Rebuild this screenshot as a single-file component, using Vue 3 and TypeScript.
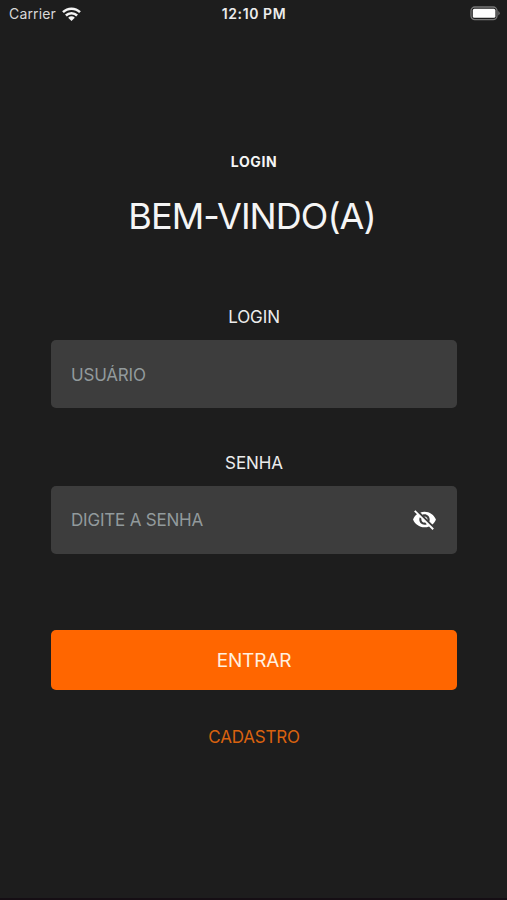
<script setup lang="ts">
import { ref } from 'vue'

const user = ref('')
const password = ref('')
const hidden = ref(true)
</script>

<template>
  <div class="screen">
    <header class="status">
      <div class="carrier">
        <span class="carrier-name">Carrier</span>
        <svg class="wifi" viewBox="0 0 19 14" width="19" height="14">
          <path d="M1 5.2a12.1 12.1 0 0 1 17 0" />
          <path d="M3.9 8.5a8 8 0 0 1 11.2 0" />
          <path class="dot" d="M6.2 10.7a4.7 4.7 0 0 1 6.6 0L9.5 14z" />
        </svg>
      </div>
      <span class="time">12:10 PM</span>
      <svg class="battery" viewBox="0 0 31 15" width="31" height="15">
        <rect class="shell" x="1" y="1" width="26" height="12.6" rx="3.8" />
        <rect class="charge" x="2.8" y="2.8" width="22.6" height="9" rx="1.6" />
        <path class="cap" d="M28.3 5a2.6 2.6 0 0 1 0 4.6z" />
      </svg>
    </header>

    <main class="content">
      <h2 class="title">LOGIN</h2>
      <h1 class="welcome">BEM-VINDO(A)</h1>

      <form class="form" @submit.prevent>
        <label class="label label-login" for="user">LOGIN</label>
        <div class="field">
          <input id="user" v-model="user" class="input input-user" type="text" placeholder="USUÁRIO" />
        </div>

        <label class="label label-password" for="password">SENHA</label>
        <div class="field">
          <input
            id="password"
            v-model="password"
            class="input"
            :type="hidden ? 'password' : 'text'"
            placeholder="DIGITE A SENHA"
          />
          <button class="toggle" type="button" @click="hidden = !hidden">
            <svg viewBox="0 0 24 24" width="25" height="25">
              <path
                d="M12 7c2.76 0 5 2.24 5 5 0 .65-.13 1.26-.36 1.83l2.92 2.92c1.51-1.26 2.7-2.89 3.43-4.75-1.73-4.39-6-7.5-11-7.5-1.4 0-2.74.25-3.98.7l2.16 2.16C10.74 7.13 11.35 7 12 7zM2 4.27l2.28 2.28.46.46C3.08 8.3 1.78 10.02 1 12c1.73 4.39 6 7.5 11 7.5 1.55 0 3.03-.3 4.38-.84l.42.42L19.73 22 21 20.73 3.27 3 2 4.27zM7.53 9.8l1.55 1.55c-.05.21-.08.43-.08.65 0 1.66 1.34 3 3 3 .22 0 .44-.03.65-.08l1.55 1.55c-.67.33-1.41.53-2.2.53-2.76 0-5-2.24-5-5 0-.79.2-1.53.53-2.2zm4.31-.78l3.15 3.15.02-.16c0-1.66-1.34-3-3-3l-.17.01z"
              />
            </svg>
          </button>
        </div>

        <button class="submit" type="submit">ENTRAR</button>
      </form>
      <a class="register">CADASTRO</a>
    </main>
  </div>
</template>

<style>
body {
  margin: 0;
  background: #1d1d1d;
}
</style>

<style scoped>
.screen {
  box-sizing: border-box;
  width: 100%;
  height: 900px;
  overflow: hidden;
  background: #1d1d1d;
  border-bottom: 2px solid #150e14;
  color: #f5f5f5;
  font-family: Inter, "Liberation Sans", sans-serif;
}
.status {
  display: grid;
  grid-template-columns: 1fr auto 1fr;
  align-items: center;
  box-sizing: border-box;
  height: 28px;
  padding: 0 6px 1px 9px;
}
.carrier {
  display: flex;
  align-items: center;
  gap: 6px;
}
.carrier-name {
  font-size: 14px;
  letter-spacing: 0.15px;
  color: #d8d8d8;
}
.wifi path {
  fill: none;
  stroke: #f4f4f4;
  stroke-width: 2.5;
}
.wifi .dot {
  fill: #f4f4f4;
  stroke: none;
}
.time {
  padding-right: 2px;
  font-size: 14px;
  font-weight: 600;
  letter-spacing: 0.6px;
  color: #ececec;
}
.battery {
  justify-self: end;
}
.shell {
  fill: none;
  stroke: #777;
  stroke-width: 1.3;
}
.charge {
  fill: #fff;
}
.cap {
  fill: #777;
}
.content {
  display: flex;
  flex-direction: column;
  align-items: center;
  padding: 0 50px 0 51px;
}
.title {
  margin: 124px 0 0;
  font-size: 14px;
  line-height: 20px;
  font-weight: 700;
  letter-spacing: 0.6px;
}
.welcome {
  margin: 20px 0 0;
  padding-right: 4px;
  font-size: 36px;
  line-height: 48px;
  font-weight: 400;
  letter-spacing: -0.95px;
}
.form {
  display: flex;
  flex-direction: column;
  width: 100%;
}
.label {
  font-size: 17px;
  line-height: 20px;
  text-align: center;
  letter-spacing: -0.1px;
  color: #ececec;
}
.label-login {
  margin-top: 67px;
}
.label-password {
  margin-top: 45px;
}
.field {
  display: flex;
  align-items: center;
  box-sizing: border-box;
  height: 68px;
  margin-top: 13px;
  padding: 0 20px;
  border-radius: 5px;
  background: #3d3d3d;
}
.input {
  flex: 1;
  min-width: 0;
  padding: 0;
  border: 0;
  outline: 0;
  background: none;
  color: #f5f5f5;
  font: 400 17px/24px Inter, "Liberation Sans", sans-serif;
  letter-spacing: -0.2px;
}
.input-user {
  padding-top: 2px;
}
.input::placeholder {
  color: #929a9c;
  opacity: 1;
}
.toggle {
  display: flex;
  padding: 0 0 2px;
  border: 0;
  background: none;
}
.toggle path {
  fill: #fff;
}
.submit {
  height: 60px;
  margin-top: 76px;
  padding: 2px 0 0;
  border: 0;
  border-radius: 5px;
  background: #ff6600;
  color: #fff0e0;
  font: 400 19px/24px Inter, "Liberation Sans", sans-serif;
  letter-spacing: -0.15px;
}
.register {
  margin-top: 37px;
  font-size: 17px;
  line-height: 20px;
  letter-spacing: -0.2px;
  color: #d9620f;
}
</style>
